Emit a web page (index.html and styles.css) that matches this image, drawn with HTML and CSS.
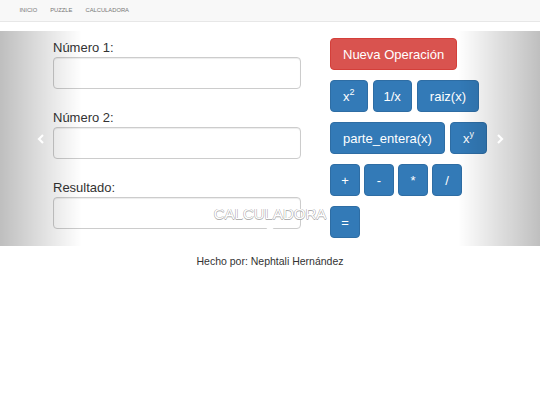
FILE: index.html
```html
<!DOCTYPE html>
<html>
	<head>
		<meta charset="utf-8">
		<title>Calculadora</title>
		<link rel="stylesheet" href="styles.css">
	</head>
	<body>
		<nav class="navbar">
			<ul class="nav">
				<li><a href="#">INICIO</a></li>
				<li><a href="#">PUZZLE</a></li>
				<li><a href="#">CALCULADORA</a></li>
			</ul>
		</nav>

		<div class="carousel">
			<div class="item">
				<form class="calc">
					<div class="campos">
						<div class="grupo">
							<label>Número 1:</label>
							<input type="text" class="caja">
						</div>
						<div class="grupo">
							<label>Número 2:</label>
							<input type="text" class="caja">
						</div>
						<div class="grupo">
							<label>Resultado:</label>
							<input type="text" class="caja">
						</div>
					</div>
					<div class="botones">
						<div class="fila">
							<button type="button" class="btn rojo">Nueva Operación</button>
						</div>
						<div class="fila">
							<button type="button" class="btn">x<sup>2</sup></button>
							<button type="button" class="btn angosto">1/x</button>
							<button type="button" class="btn">raiz(x)</button>
						</div>
						<div class="fila">
							<button type="button" class="btn">parte_entera(x)</button>
							<button type="button" class="btn">x<sup>y</sup></button>
						</div>
						<div class="fila juntos">
							<button type="button" class="btn chico">+</button>
							<button type="button" class="btn chico">-</button>
							<button type="button" class="btn chico">*</button>
							<button type="button" class="btn chico">/</button>
						</div>
						<div class="fila">
							<button type="button" class="btn chico">=</button>
						</div>
					</div>
				</form>
				<div class="caption">CALCULADORA</div>
			</div>

			<a class="control left" href="#">
				<svg width="8" height="10" viewBox="0 0 8 10"><path d="M6 1 L2 5 L6 9" fill="none" stroke="#fff" stroke-width="2.2"/></svg>
			</a>
			<a class="control right" href="#">
				<svg width="8" height="10" viewBox="0 0 8 10"><path d="M2 1 L6 5 L2 9" fill="none" stroke="#fff" stroke-width="2.2"/></svg>
			</a>
			<ol class="indicators">
				<li class="active"></li>
			</ol>
		</div>

		<footer class="pie">Hecho por: Nephtali Hernández</footer>
	</body>
</html>
```

FILE: styles.css
```css
*{
	margin: 0;
	padding: 0;
	box-sizing: border-box;
}

body{
	font-family: "Liberation Sans", Arial, sans-serif;
	font-size: 13px;
	color: #333;
	background: #fff;
}

ul, ol{
	list-style: none;
}

/* barra de navegacion */
.navbar{
	height: 22px;
	background-color: #f8f8f8;
	border-bottom: 1px solid #e7e7e7;
	margin-bottom: 9px;
}

.nav{
	display: flex;
	padding-left: 13px;
}

.nav a{
	display: block;
	padding: 0 6.5px;
	line-height: 21px;
	font-size: 5.8px;
	color: #777;
	text-decoration: none;
}

/* carrusel */
.carousel{
	position: relative;
	height: 215px;
	overflow: hidden;
}

.carousel .item{
	height: 100%;
}

.calc{
	display: flex;
	gap: 29px;
	padding-left: 53px;
}

.campos{
	width: 248px;
	padding-top: 8px;
}

.grupo{
	margin-bottom: 20px;
}

.grupo label{
	display: block;
	line-height: 18px;
}

.caja{
	display: block;
	width: 100%;
	height: 32px;
	border: 1px solid #ccc;
	border-radius: 4px;
	box-shadow: inset 0 1px 1px rgba(0,0,0,.075);
	background: #fff;
}

.botones{
	padding-top: 7px;
	display: flex;
	flex-direction: column;
	gap: 10px;
}

.fila{
	display: flex;
	gap: 5px;
}

.fila.juntos{
	gap: 4px;
}

.btn{
	height: 32px;
	padding: 0 12px;
	font-family: inherit;
	font-size: 13px;
	color: #fff;
	background-color: #337ab7;
	border: 1px solid #2e6da4;
	border-radius: 4px;
	cursor: pointer;
}

.btn sup{
	font-size: 9px;
	line-height: 0;
	vertical-align: 6px;
}

.btn.angosto{
	padding: 0 10px;
}

.btn.chico{
	width: 30px;
	padding: 0;
}

.btn.rojo{
	background-color: #d9534f;
	border-color: #d43f3a;
}

.caption{
	position: absolute;
	z-index: 2;
	left: 15%;
	right: 15%;
	top: 173px;
	text-align: center;
	font-size: 15px;
	color: #fff;
	text-shadow: -0.5px 0 #b0b0b0, 0.5px 0 #b0b0b0, 0 -0.5px #b0b0b0, 0 0.5px #b0b0b0;
	line-height: 20px;
}

.control{
	position: absolute;
	top: 0;
	bottom: 0;
	width: 15%;
	display: flex;
	align-items: center;
	justify-content: center;
	opacity: .5;
}

.control.left{
	left: 0;
	background-image: linear-gradient(to right, rgba(0,0,0,.5) 0, rgba(0,0,0,.0001) 100%);
}

.control.right{
	right: 0;
	background-image: linear-gradient(to right, rgba(0,0,0,.0001) 0, rgba(0,0,0,.5) 100%);
}

.indicators{
	position: absolute;
	z-index: 1;
	left: 0;
	right: 0;
	top: 196px;
	display: flex;
	justify-content: center;
}

.indicators li{
	width: 10px;
	height: 10px;
	margin: 0 2px;
	border: 1px solid #fff;
	border-radius: 10px;
	background-color: #fff;
}

/* pie */
.pie{
	margin-top: 8px;
	text-align: center;
	font-size: 10.5px;
	line-height: 15px;
}
```
